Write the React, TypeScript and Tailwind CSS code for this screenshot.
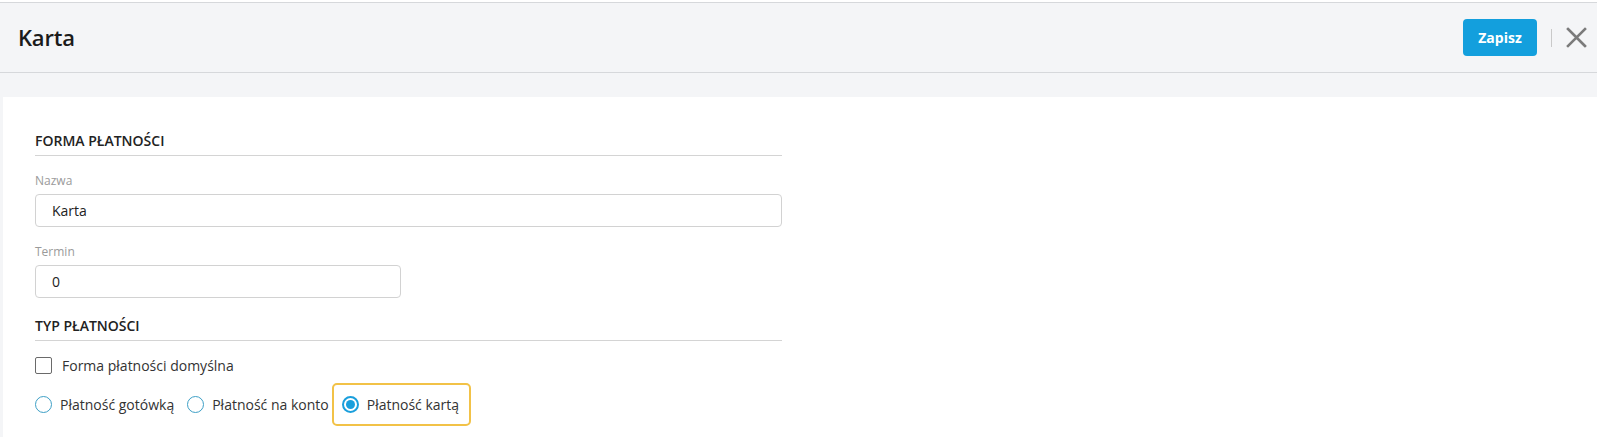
import React, { useState } from "react";

const font = { fontFamily: '"Open Sans", "Noto Sans", sans-serif' };

function Radio({ checked, label }: { checked?: boolean; label: string }) {
  return (
    <span className="flex items-center gap-[8px]">
      <span
        className={
          "w-[17px] h-[17px] rounded-full border flex items-center justify-center bg-white " +
          (checked ? "border-[#1a9fdc] border-2" : "border-[#3d9fc6]")
        }
      >
        {checked && <span className="w-[9px] h-[9px] rounded-full bg-[#1a9fdc]" />}
      </span>
      <span className="text-[14px] text-[#333]">{label}</span>
    </span>
  );
}

export default function App() {
  const [name] = useState("Karta");
  const [term] = useState("0");

  return (
    <div style={font} className="w-full h-[437px] flex flex-col bg-[#f4f5f7] overflow-hidden">
      <div className="h-[2px] bg-white" />
      <header className="h-[71px] shrink-0 flex items-center justify-between pl-[18px] pr-[10px] border-t border-b border-[#d6d8db] bg-[#f4f5f7]">
        <h1 className="text-[22px] font-semibold text-[#1b1b1b] tracking-[-0.2px]">Karta</h1>
        <div className="flex items-center">
          <button className="w-[74px] h-[37px] rounded-[4px] bg-[#139fdd] text-white text-[14px] font-bold">
            Zapisz
          </button>
          <span className="ml-[14px] w-px h-[18px] bg-[#c9c9c9]" />
          <svg className="ml-[14px]" width="21" height="21" viewBox="0 0 21 21" fill="none">
            <path d="M2 2L19 19M19 2L2 19" stroke="#7b7b7b" strokeWidth="2.6" strokeLinecap="square" />
          </svg>
        </div>
      </header>
      <div className="h-[24px] shrink-0" />
      <main className="flex-1 ml-[3px] bg-white pl-[32px] pt-[35px]">
        <div className="w-[747px]">
          <h2 className="text-[14px] font-semibold text-[#222] uppercase pb-[5px] border-b border-[#d4d4d4] leading-[18px]">
            Forma płatności
          </h2>
          <label className="block mt-[16px] text-[12px] text-[#9a9a9a] leading-[17px]">Nazwa</label>
          <div className="mt-[5px] h-[33px] rounded-[4px] border border-[#d2d2d2] flex items-center pl-[16px] text-[14px] text-[#222]">
            {name}
          </div>
          <label className="block mt-[16px] text-[12px] text-[#9a9a9a] leading-[17px]">Termin</label>
          <div className="mt-[5px] w-[366px] h-[33px] rounded-[4px] border border-[#d2d2d2] flex items-center pl-[16px] text-[14px] text-[#222]">
            {term}
          </div>
          <h2 className="mt-[19px] text-[14px] font-semibold text-[#222] uppercase pb-[5px] border-b border-[#d4d4d4] leading-[18px]">
            Typ płatności
          </h2>
          <div className="mt-[14px] flex items-center gap-[10px]">
            <span className="w-[17px] h-[17px] border border-[#6a6a6a] rounded-[2px] bg-white" />
            <span className="text-[14px] text-[#333]">Forma płatności domyślna</span>
          </div>
          <div className="mt-[7px] flex items-center">
            <Radio label="Płatność gotówką" />
            <span className="ml-[13px]">
              <Radio label="Płatność na konto" />
            </span>
            <span className="ml-[3px] h-[43px] flex items-center pl-[8px] pr-[10px] border-2 border-[#f2c247] rounded-[5px]">
              <Radio checked label="Płatność kartą" />
            </span>
          </div>
        </div>
      </main>
    </div>
  );
}
